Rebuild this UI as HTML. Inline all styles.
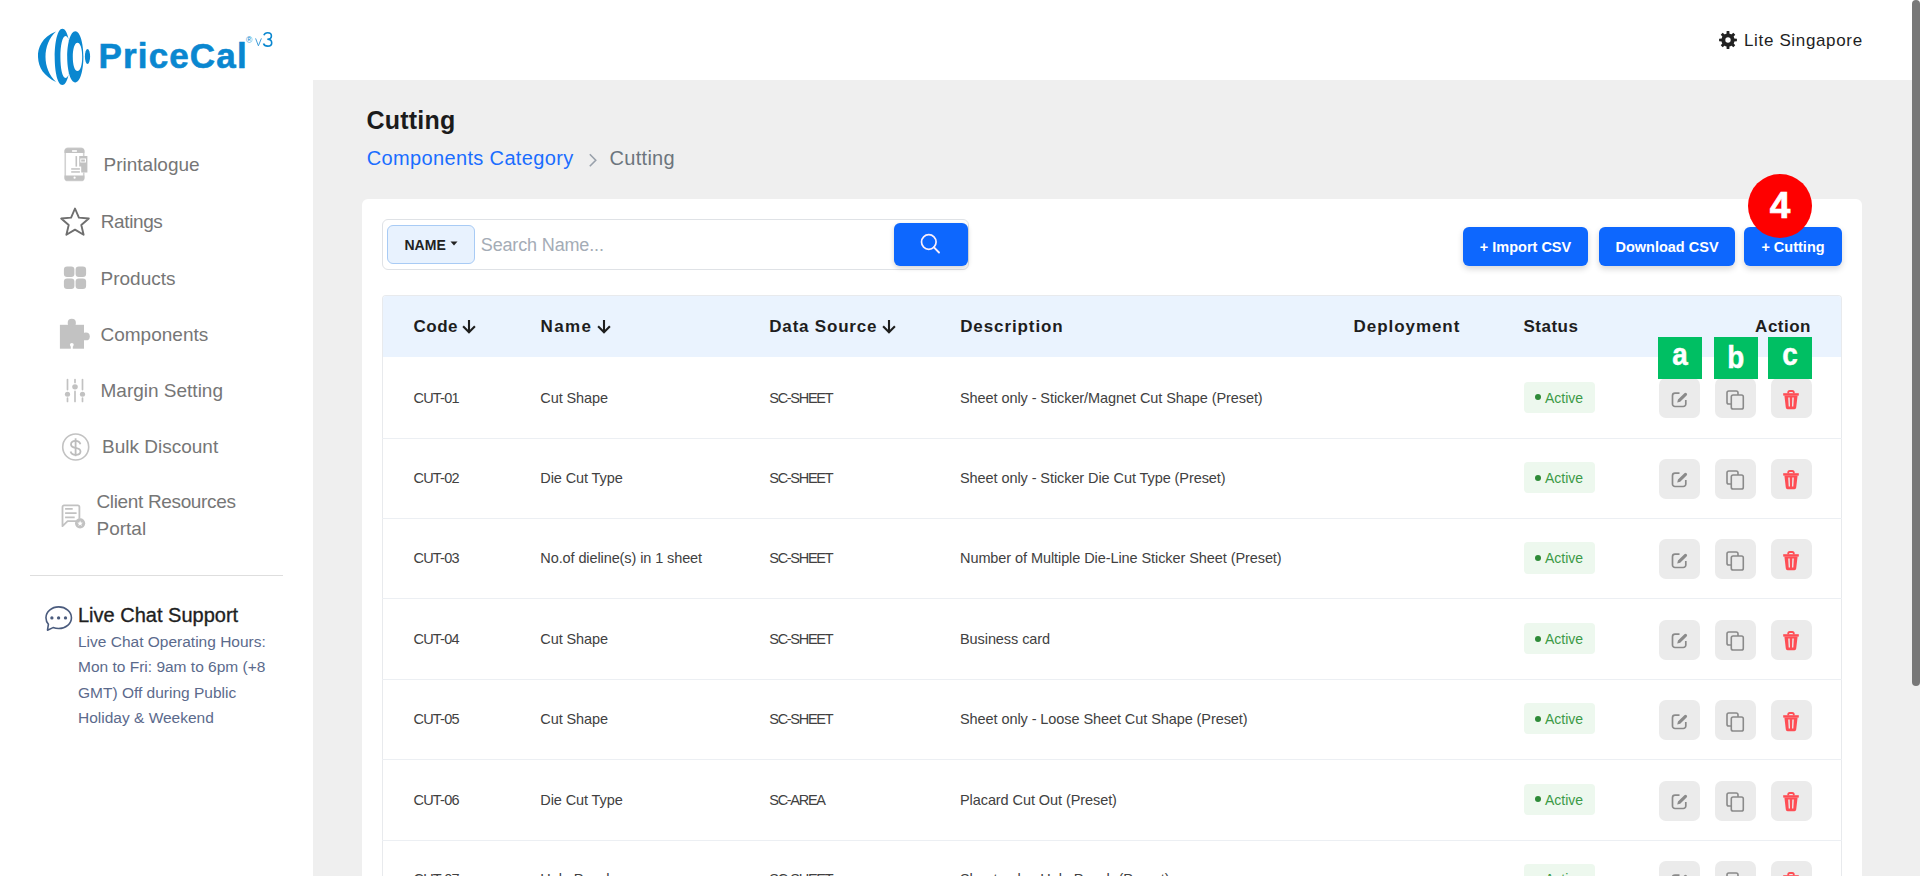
<!DOCTYPE html><html><head><meta charset="utf-8"><title>Cutting</title><style>
*{box-sizing:border-box;margin:0;padding:0}
html,body{width:1920px;height:876px;overflow:hidden;background:#fff;font-family:"Liberation Sans",sans-serif}
.t{position:absolute;white-space:nowrap}
.b{position:absolute}
svg{position:absolute;overflow:visible}
</style></head><body>
<div class="b" style="left:313px;top:80px;width:1607px;height:796px;background:#efefef"></div>
<svg style="left:0;top:0" width="320" height="100" viewBox="0 0 320 100">
<g fill="#0a87d0">
<path d="M56,31.5 C42,37 37.5,48 38,57 C38.5,68 44,76 56,82 C49,75 45.5,66 45.5,57 C45.5,47 49,38 56,31.5 Z"/>
<path fill-rule="evenodd" d="M62.4,28.7 C57.5,28.7 54.7,42 54.7,57 C54.7,72 57.5,85 62.4,85 C67.3,85 70.2,72 70.2,57 C70.2,42 67.3,28.7 62.4,28.7 Z M65.6,36 C62.2,36 60.4,46 60.4,57 C60.4,68 62.2,77.9 65.6,77.9 C69,77.9 70.8,68 70.8,57 C70.8,46 69,36 65.6,36 Z"/>
<path fill-rule="evenodd" d="M75.3,31.2 C70.5,31.2 67.2,43 67.2,56.8 C67.2,70.6 70.5,82.4 75.3,82.4 C80.1,82.4 83.4,70.6 83.4,56.8 C83.4,43 80.1,31.2 75.3,31.2 Z M77.5,42.8 C74.6,42.8 72.8,49 72.8,57 C72.8,65 74.6,71.1 77.5,71.1 C80.4,71.1 82.2,65 82.2,57 C82.2,49 80.4,42.8 77.5,42.8 Z"/>
<ellipse cx="87.5" cy="56.5" rx="2.6" ry="7.6"/>
</g>
</svg>
<div class="t" style="left:98.50px;top:38.37px;font-size:35px;line-height:35px;font-weight:700;color:#0a87d0;letter-spacing:1.15px;-webkit-text-stroke:0.6px #0a87d0;">PriceCal</div>
<div class="t" style="left:246.00px;top:36.30px;font-size:8.5px;line-height:8.5px;font-weight:400;color:#0a87d0;letter-spacing:0px;">&#174;</div>
<svg style="left:0;top:0" width="300" height="60" viewBox="0 0 300 60"><path d="M255.6,38.4 L258.4,45.8 L261.4,38.4" fill="none" stroke="#3a9ad8" stroke-width="0.95"/><path d="M263.9,35.2 C264.6,33.3 266.2,32.8 267.7,32.8 C270.1,32.8 271.4,34.3 271.4,36 C271.4,37.9 269.9,39.3 267.3,39.3 C270.3,39.3 271.7,41 271.7,42.9 C271.7,45 270,46.1 267.7,46.1 C265.6,46.1 264.1,45.2 263.5,43.4" fill="none" stroke="#0a87d0" stroke-width="1.6"/></svg>
<svg style="left:1718.8px;top:31px" width="18" height="18" viewBox="0 0 18 18"><path fill="#222" d="M7.46,3.20 L7.66,0.10 L10.34,0.10 L10.54,3.20 Z M12.01,3.81 L14.34,1.76 L16.24,3.66 L14.19,5.99 Z M14.80,7.46 L17.90,7.66 L17.90,10.34 L14.80,10.54 Z M14.19,12.01 L16.24,14.34 L14.34,16.24 L12.01,14.19 Z M10.54,14.80 L10.34,17.90 L7.66,17.90 L7.46,14.80 Z M5.99,14.19 L3.66,16.24 L1.76,14.34 L3.81,12.01 Z M3.20,10.54 L0.10,10.34 L0.10,7.66 L3.20,7.46 Z M3.81,5.99 L1.76,3.66 L3.66,1.76 L5.99,3.81 Z"/><circle cx="9" cy="9" r="6.6" fill="#222"/><circle cx="9" cy="9" r="2.7" fill="#fff"/></svg>
<div class="t" style="left:1744.00px;top:32.21px;font-size:17px;line-height:17px;font-weight:400;color:#1e1e1e;letter-spacing:0.65px;">Lite Singapore</div>
<svg style="left:60px;top:144px" width="34" height="40" viewBox="0 0 34 40">
<path d="M5.25,23 V7 A2.6,2.6 0 0 1 7.85,4.3 H21.1 A2.6,2.6 0 0 1 23.7,7 V12 M23.7,28.5 V33.9 A2.6,2.6 0 0 1 21.1,36.5 H7.85 A2.6,2.6 0 0 1 5.25,33.9 V23" fill="none" stroke="#d2d2d2" stroke-width="1.6"/>
<path d="M4.5,8.9 V7 A2.8,2.8 0 0 1 7.3,4.3 H21.6 A2.8,2.8 0 0 1 24.4,7 V8.9 Z" fill="#c2c2c2"/>
<rect x="12.1" y="6.2" width="4.8" height="1.6" fill="#fff"/>
<path d="M4.5,31.5 H24.4 V33.9 A2.8,2.8 0 0 1 21.6,36.6 H7.3 A2.8,2.8 0 0 1 4.5,33.9 Z" fill="#c2c2c2"/>
<circle cx="14.6" cy="33.7" r="1.1" fill="#fff"/>
<rect x="15.5" y="12.1" width="1.6" height="10.5" fill="#c2c2c2"/>
<path fill-rule="evenodd" d="M19.2,12.1 H27.4 V28.6 H21.2 V22.6 H19.2 Z M20.3,14.6 H26 V18.5 H20.3 Z" fill="#c2c2c2"/>
<rect x="21.2" y="15.5" width="3.7" height="2.1" fill="#c2c2c2"/>
<rect x="11.2" y="24.2" width="8.7" height="1.5" fill="#c2c2c2"/>
<rect x="11.2" y="27.2" width="8.7" height="1.5" fill="#c2c2c2"/>
</svg>
<div class="t" style="left:103.50px;top:154.82px;font-size:19px;line-height:19px;font-weight:400;color:#767676;letter-spacing:0px;">Printalogue</div>
<svg style="left:59px;top:207px" width="32" height="31" viewBox="0 0 32 31">
<path d="M16,1.5 L19.9,10.6 L29.8,11.5 L22.3,18 L24.6,27.8 L16,22.6 L7.4,27.8 L9.7,18 L2.2,11.5 L12.1,10.6 Z" fill="none" stroke="#6f6f6f" stroke-width="1.9" stroke-linejoin="round"/>
</svg>
<div class="t" style="left:100.80px;top:211.82px;font-size:19px;line-height:19px;font-weight:400;color:#767676;letter-spacing:-0.4px;">Ratings</div>
<svg style="left:63px;top:266px" width="24" height="24" viewBox="0 0 24 24">
<rect x="0.9" y="0.5" width="10.5" height="10.5" rx="3.2" fill="#c2c2c2"/><rect x="12.6" y="0.5" width="10.5" height="10.5" rx="3.2" fill="#c2c2c2"/>
<rect x="0.9" y="12.4" width="10.5" height="10.5" rx="3.2" fill="#c2c2c2"/><rect x="12.6" y="12.4" width="10.5" height="10.5" rx="3.2" fill="#c2c2c2"/>
</svg>
<div class="t" style="left:100.50px;top:268.82px;font-size:19px;line-height:19px;font-weight:400;color:#767676;letter-spacing:0px;">Products</div>
<svg style="left:59px;top:318px" width="32" height="32" viewBox="0 0 32 32">
<rect x="0.9" y="6.8" width="24.1" height="23.9" fill="#c2c2c2"/>
<circle cx="12.8" cy="4.9" r="4.1" fill="#c2c2c2"/>
<circle cx="26.9" cy="18.4" r="3.9" fill="#c2c2c2"/>
<circle cx="12.8" cy="26.8" r="1.9" fill="#fff"/>
<rect x="11.8" y="26.8" width="2" height="4.5" fill="#fff"/>
</svg>
<div class="t" style="left:100.50px;top:325.22px;font-size:19px;line-height:19px;font-weight:400;color:#767676;letter-spacing:0px;">Components</div>
<svg style="left:60px;top:374px" width="32" height="32" viewBox="0 0 32 32">
<g stroke="#c2c2c2" stroke-width="1.7" fill="none" stroke-linecap="round">
<path d="M7.5,5.6 V15.6 M7.5,24.2 V27.4"/>
<path d="M15,5.6 V8.4 M15,17.4 V27.4"/>
<path d="M22.5,5.6 V15.6 M22.5,24.2 V27.4"/>
</g>
<ellipse cx="7.5" cy="20.3" rx="2.6" ry="2.5" fill="#c2c2c2"/><ellipse cx="15" cy="12.8" rx="2.8" ry="2.6" fill="#c2c2c2"/><ellipse cx="22.5" cy="20.3" rx="2.6" ry="2.5" fill="#c2c2c2"/>
</svg>
<div class="t" style="left:100.50px;top:380.62px;font-size:19px;line-height:19px;font-weight:400;color:#767676;letter-spacing:0px;">Margin Setting</div>
<svg style="left:56px;top:428px" width="38" height="38" viewBox="0 0 38 38">
<circle cx="19.7" cy="19" r="13" fill="none" stroke="#c2c2c2" stroke-width="1.6"/>
<path d="M24.4,16.2 C23.8,14 22,12.9 19.6,12.9 C16.8,12.9 15,14.4 15,16.5 C15,18.7 16.8,19.4 19.6,19.9 C22.6,20.4 24.5,21.4 24.5,23.6 C24.5,25.6 22.5,26.9 19.6,26.9 C17,26.9 15.2,25.7 14.6,23.5" fill="none" stroke="#bdbdbd" stroke-width="1.8"/>
<path d="M19.6,10.3 V28.2" stroke="#bdbdbd" stroke-width="1.8"/>
</svg>
<div class="t" style="left:102.00px;top:437.12px;font-size:19px;line-height:19px;font-weight:400;color:#767676;letter-spacing:0px;">Bulk Discount</div>
<svg style="left:56px;top:496px" width="38" height="38" viewBox="0 0 38 38">
<path d="M23.4,22.8 V10.9 A1.5,1.5 0 0 0 21.9,9.4 H8 A1.5,1.5 0 0 0 6.5,10.9 V30.2 L11.6,25.2 H20" fill="none" stroke="#c2c2c2" stroke-width="1.8" stroke-linejoin="round"/>
<path d="M9.1,12.8 H16.7 M9.1,17.1 H20.6 M9.1,21.3 H18.7" stroke="#c2c2c2" stroke-width="1.8"/>
<circle cx="24.1" cy="27.3" r="5.1" fill="#c2c2c2"/>
<path d="M24.10,24.60 L24.83,26.59 L26.95,26.67 L25.29,27.99 L25.86,30.03 L24.10,28.85 L22.34,30.03 L22.91,27.99 L21.25,26.67 L23.37,26.59 Z" fill="#fff"/>
</svg>
<div class="t" style="left:96.50px;top:492.22px;font-size:19px;line-height:19px;font-weight:400;color:#767676;letter-spacing:-0.35px;">Client Resources</div>
<div class="t" style="left:96.50px;top:519.22px;font-size:19px;line-height:19px;font-weight:400;color:#767676;letter-spacing:0px;">Portal</div>
<div class="b" style="left:30px;top:575px;width:253px;height:1px;background:#dedede"></div>
<svg style="left:44px;top:605px" width="30" height="28" viewBox="0 0 30 28">
<path d="M9,22.6 C10.8,23.2 12.7,23.55 14.7,23.55 C21.8,23.55 27.45,18.7 27.45,12.7 C27.45,6.7 21.8,1.85 14.7,1.85 C7.6,1.85 1.95,6.7 1.95,12.7 C1.95,15.2 2.8,17.4 4.4,19.3 L3.5,25.2 Z" fill="none" stroke="#4a5b7d" stroke-width="1.6" stroke-linejoin="round"/>
<circle cx="7.9" cy="12.9" r="1.65" fill="#4a5b7d"/><circle cx="14.6" cy="12.9" r="1.65" fill="#4a5b7d"/><circle cx="21.5" cy="12.9" r="1.65" fill="#4a5b7d"/>
</svg>
<div class="t" style="left:78.00px;top:605.07px;font-size:20px;line-height:20px;font-weight:400;color:#1f1f1f;letter-spacing:0px;-webkit-text-stroke:0.35px #1f1f1f;">Live Chat Support</div>
<div class="t" style="left:78.00px;top:634.18px;font-size:15.5px;line-height:15.5px;font-weight:400;color:#5b6a8c;letter-spacing:0px;">Live Chat Operating Hours:</div>
<div class="t" style="left:78.00px;top:658.78px;font-size:15.5px;line-height:15.5px;font-weight:400;color:#5b6a8c;letter-spacing:0px;">Mon to Fri: 9am to 6pm (+8</div>
<div class="t" style="left:78.00px;top:684.58px;font-size:15.5px;line-height:15.5px;font-weight:400;color:#5b6a8c;letter-spacing:0px;">GMT) Off during Public</div>
<div class="t" style="left:78.00px;top:709.88px;font-size:15.5px;line-height:15.5px;font-weight:400;color:#5b6a8c;letter-spacing:0px;">Holiday &amp; Weekend</div>
<div class="t" style="left:366.50px;top:107.84px;font-size:25px;line-height:25px;font-weight:700;color:#1b1b1b;letter-spacing:0.2px;">Cutting</div>
<div class="t" style="left:366.80px;top:147.87px;font-size:20px;line-height:20px;font-weight:400;color:#1a6dff;letter-spacing:0.35px;">Components Category</div>
<svg style="left:586px;top:150px" width="14" height="20" viewBox="0 0 14 20"><path d="M3.8,4.2 L9.75,10.2 L3.8,16.2" fill="none" stroke="#99a1ab" stroke-width="1.6"/></svg>
<div class="t" style="left:609.50px;top:147.87px;font-size:20px;line-height:20px;font-weight:400;color:#6c757d;letter-spacing:0.3px;">Cutting</div>
<div class="b" style="left:362px;top:199px;width:1500px;height:701px;background:#fff;border-radius:6px"></div>
<div class="b" style="left:382px;top:219px;width:587px;height:51px;border:1px solid #dfe2e6;border-radius:6px;background:#fff"></div>
<div class="b" style="left:387px;top:225px;width:88px;height:39px;border:1px solid #a8cbf5;border-radius:6px;background:#e8f2fe"></div>
<div class="t" style="left:404.50px;top:237.95px;font-size:14px;line-height:14px;font-weight:700;color:#222;letter-spacing:0px;">NAME</div>
<svg style="left:450px;top:241px" width="8" height="5" viewBox="0 0 8 5"><path d="M0.5,0.5 H7.5 L4,4.6 Z" fill="#222"/></svg>
<div class="t" style="left:480.80px;top:235.76px;font-size:18px;line-height:18px;font-weight:400;color:#a4acb6;letter-spacing:-0.15px;">Search Name...</div>
<div class="b" style="left:894px;top:223px;width:74px;height:43px;background:#0d67fe;border-radius:6px;box-shadow:0 2px 5px rgba(0,0,0,.18)"></div>
<svg style="left:918px;top:232px" width="24" height="24" viewBox="0 0 24 24"><circle cx="10.8" cy="10" r="7.3" fill="none" stroke="#fbeefa" stroke-width="1.7"/><path d="M16,15.3 L21,20.5" stroke="#fbeefa" stroke-width="1.9" stroke-linecap="round"/></svg>
<div class="b" style="left:1463px;top:227px;width:125px;height:39px;background:#0d67fe;border-radius:6px;box-shadow:0 3px 6px rgba(0,0,0,.16);color:#fff;font-weight:700;font-size:14.5px;line-height:41px;text-align:center;white-space:nowrap">+ Import CSV</div>
<div class="b" style="left:1599px;top:227px;width:136px;height:39px;background:#0d67fe;border-radius:6px;box-shadow:0 3px 6px rgba(0,0,0,.16);color:#fff;font-weight:700;font-size:14.5px;line-height:41px;text-align:center;white-space:nowrap">Download CSV</div>
<div class="b" style="left:1744px;top:227px;width:98px;height:39px;background:#0d67fe;border-radius:6px;box-shadow:0 3px 6px rgba(0,0,0,.16);color:#fff;font-weight:700;font-size:14.5px;line-height:41px;text-align:center;white-space:nowrap">+ Cutting</div>
<div class="b" style="left:1748px;top:173.6px;width:64px;height:64px;border-radius:50%;background:#fe0000;color:#fff;font-weight:700;font-size:37px;line-height:64px;text-align:center;-webkit-text-stroke:0.7px #fff">4</div>
<div class="b" style="left:382px;top:294.6px;width:1460px;height:605.4px;border:1px solid #e8eaed;border-bottom:0;border-top-left-radius:4px;border-top-right-radius:4px"></div>
<div class="b" style="left:383px;top:295.6px;width:1458px;height:61.89999999999998px;background:#eaf3fe;border-top-left-radius:3px;border-top-right-radius:3px"></div>
<div class="t" style="left:413.50px;top:318.31px;font-size:17px;line-height:17px;font-weight:700;color:#1e1e1e;letter-spacing:0.5px;">Code</div>
<div class="t" style="left:540.50px;top:318.31px;font-size:17px;line-height:17px;font-weight:700;color:#1e1e1e;letter-spacing:1.4px;">Name</div>
<div class="t" style="left:769.30px;top:318.31px;font-size:17px;line-height:17px;font-weight:700;color:#1e1e1e;letter-spacing:0.8px;">Data Source</div>
<div class="t" style="left:960.20px;top:318.31px;font-size:17px;line-height:17px;font-weight:700;color:#1e1e1e;letter-spacing:0.9px;">Description</div>
<div class="t" style="left:1353.50px;top:318.31px;font-size:17px;line-height:17px;font-weight:700;color:#1e1e1e;letter-spacing:0.95px;">Deployment</div>
<div class="t" style="left:1523.50px;top:318.31px;font-size:17px;line-height:17px;font-weight:700;color:#1e1e1e;letter-spacing:0.5px;">Status</div>
<div class="t" style="right:109px;top:318.31px;font-size:17px;line-height:17px;font-weight:700;color:#1e1e1e;letter-spacing:0.5px">Action</div>
<svg style="left:462.3px;top:318px" width="14" height="16" viewBox="0 0 14 16"><path d="M7,1.9 V14 M1.1,8.3 L7,14.2 L12.9,8.3" fill="none" stroke="#1e1e1e" stroke-width="2.1"/></svg>
<svg style="left:596.7px;top:318px" width="14" height="16" viewBox="0 0 14 16"><path d="M7,1.9 V14 M1.1,8.3 L7,14.2 L12.9,8.3" fill="none" stroke="#1e1e1e" stroke-width="2.1"/></svg>
<svg style="left:881.6px;top:318px" width="14" height="16" viewBox="0 0 14 16"><path d="M7,1.9 V14 M1.1,8.3 L7,14.2 L12.9,8.3" fill="none" stroke="#1e1e1e" stroke-width="2.1"/></svg>
<div class="t" style="left:413.50px;top:390.53px;font-size:14.5px;line-height:14.5px;font-weight:400;color:#414141;letter-spacing:-0.8px;">CUT-01</div>
<div class="t" style="left:540.30px;top:390.53px;font-size:14.5px;line-height:14.5px;font-weight:400;color:#414141;letter-spacing:-0.1px;">Cut Shape</div>
<div class="t" style="left:769.30px;top:390.53px;font-size:14.5px;line-height:14.5px;font-weight:400;color:#414141;letter-spacing:-1.3px;">SC-SHEET</div>
<div class="t" style="left:960.00px;top:390.53px;font-size:14.5px;line-height:14.5px;font-weight:400;color:#414141;letter-spacing:-0.08px;">Sheet only - Sticker/Magnet Cut Shape (Preset)</div>
<div class="b" style="left:1524px;top:381.6px;width:71px;height:31.099999999999966px;background:#edf8ee;border-radius:4px"></div>
<div class="b" style="left:1535px;top:394.3px;width:6px;height:6.0px;background:#2e8b38;border-radius:50%"></div>
<div class="t" style="left:1545.00px;top:390.65px;font-size:14px;line-height:14px;font-weight:400;color:#3b9a46;letter-spacing:0px;">Active</div>
<div class="b" style="left:1659px;top:378.4px;width:41px;height:40.0px;background:#ebebeb;border-radius:7px"></div>
<div class="b" style="left:1715px;top:378.4px;width:41px;height:40.0px;background:#ebebeb;border-radius:7px"></div>
<div class="b" style="left:1771px;top:378.4px;width:41px;height:40.0px;background:#ebebeb;border-radius:7px"></div>
<svg style="left:1671px;top:390.90px" width="18" height="18" viewBox="0 0 18 18"><path d="M8.5,2.2 H4 A2.5,2.5 0 0 0 1.5,4.7 V13 A2.5,2.5 0 0 0 4,15.5 H12.3 A2.5,2.5 0 0 0 14.8,13 V9" fill="none" stroke="#8a8a8a" stroke-width="1.7"/><path d="M6.2,11.6 L7,8.6 L13.4,2.2 A1.4,1.4 0 0 1 15.6,4.4 L9.2,10.8 Z" fill="#8a8a8a"/></svg>
<svg style="left:1726px;top:389.90px" width="19" height="20" viewBox="0 0 19 20"><rect x="1" y="1" width="11" height="13" rx="1.8" fill="none" stroke="#8a8a8a" stroke-width="1.6"/><rect x="5.3" y="5" width="12" height="14" rx="1.8" fill="#ebebeb" stroke="#8a8a8a" stroke-width="1.6"/></svg>
<svg style="left:1782px;top:389.90px" width="18" height="20" viewBox="0 0 18 20"><path d="M6.2,3.5 V2.6 A1.6,1.6 0 0 1 7.8,1 H10.2 A1.6,1.6 0 0 1 11.8,2.6 V3.5" fill="none" stroke="#fe4e55" stroke-width="1.8"/><path d="M1.2,3.2 H16.8 V5.6 H1.2 Z" fill="#fe4e55"/><path d="M2.4,5.6 H15.6 L14.2,17.6 A1.8,1.8 0 0 1 12.4,19.2 H5.6 A1.8,1.8 0 0 1 3.8,17.6 Z M6.2,7.6 L6.7,16.6 H8 L7.7,7.6 Z M10.3,7.6 L10,16.6 H11.3 L11.8,7.6 Z" fill="#fe4e55" fill-rule="evenodd"/></svg>
<div class="b" style="left:382px;top:437.62px;width:1460px;height:1.0px;background:#eceff3"></div>
<div class="t" style="left:413.50px;top:470.95px;font-size:14.5px;line-height:14.5px;font-weight:400;color:#414141;letter-spacing:-0.8px;">CUT-02</div>
<div class="t" style="left:540.30px;top:470.95px;font-size:14.5px;line-height:14.5px;font-weight:400;color:#414141;letter-spacing:-0.1px;">Die Cut Type</div>
<div class="t" style="left:769.30px;top:470.95px;font-size:14.5px;line-height:14.5px;font-weight:400;color:#414141;letter-spacing:-1.3px;">SC-SHEET</div>
<div class="t" style="left:960.00px;top:470.95px;font-size:14.5px;line-height:14.5px;font-weight:400;color:#414141;letter-spacing:-0.08px;">Sheet only - Sticker Die Cut Type (Preset)</div>
<div class="b" style="left:1524px;top:462.02px;width:71px;height:31.100000000000023px;background:#edf8ee;border-radius:4px"></div>
<div class="b" style="left:1535px;top:474.72px;width:6px;height:6.0px;background:#2e8b38;border-radius:50%"></div>
<div class="t" style="left:1545.00px;top:471.07px;font-size:14px;line-height:14px;font-weight:400;color:#3b9a46;letter-spacing:0px;">Active</div>
<div class="b" style="left:1659px;top:458.82px;width:41px;height:40.0px;background:#ebebeb;border-radius:7px"></div>
<div class="b" style="left:1715px;top:458.82px;width:41px;height:40.0px;background:#ebebeb;border-radius:7px"></div>
<div class="b" style="left:1771px;top:458.82px;width:41px;height:40.0px;background:#ebebeb;border-radius:7px"></div>
<svg style="left:1671px;top:471.32px" width="18" height="18" viewBox="0 0 18 18"><path d="M8.5,2.2 H4 A2.5,2.5 0 0 0 1.5,4.7 V13 A2.5,2.5 0 0 0 4,15.5 H12.3 A2.5,2.5 0 0 0 14.8,13 V9" fill="none" stroke="#8a8a8a" stroke-width="1.7"/><path d="M6.2,11.6 L7,8.6 L13.4,2.2 A1.4,1.4 0 0 1 15.6,4.4 L9.2,10.8 Z" fill="#8a8a8a"/></svg>
<svg style="left:1726px;top:470.32px" width="19" height="20" viewBox="0 0 19 20"><rect x="1" y="1" width="11" height="13" rx="1.8" fill="none" stroke="#8a8a8a" stroke-width="1.6"/><rect x="5.3" y="5" width="12" height="14" rx="1.8" fill="#ebebeb" stroke="#8a8a8a" stroke-width="1.6"/></svg>
<svg style="left:1782px;top:470.32px" width="18" height="20" viewBox="0 0 18 20"><path d="M6.2,3.5 V2.6 A1.6,1.6 0 0 1 7.8,1 H10.2 A1.6,1.6 0 0 1 11.8,2.6 V3.5" fill="none" stroke="#fe4e55" stroke-width="1.8"/><path d="M1.2,3.2 H16.8 V5.6 H1.2 Z" fill="#fe4e55"/><path d="M2.4,5.6 H15.6 L14.2,17.6 A1.8,1.8 0 0 1 12.4,19.2 H5.6 A1.8,1.8 0 0 1 3.8,17.6 Z M6.2,7.6 L6.7,16.6 H8 L7.7,7.6 Z M10.3,7.6 L10,16.6 H11.3 L11.8,7.6 Z" fill="#fe4e55" fill-rule="evenodd"/></svg>
<div class="b" style="left:382px;top:518.04px;width:1460px;height:1.0px;background:#eceff3"></div>
<div class="t" style="left:413.50px;top:551.37px;font-size:14.5px;line-height:14.5px;font-weight:400;color:#414141;letter-spacing:-0.8px;">CUT-03</div>
<div class="t" style="left:540.30px;top:551.37px;font-size:14.5px;line-height:14.5px;font-weight:400;color:#414141;letter-spacing:-0.1px;">No.of dieline(s) in 1 sheet</div>
<div class="t" style="left:769.30px;top:551.37px;font-size:14.5px;line-height:14.5px;font-weight:400;color:#414141;letter-spacing:-1.3px;">SC-SHEET</div>
<div class="t" style="left:960.00px;top:551.37px;font-size:14.5px;line-height:14.5px;font-weight:400;color:#414141;letter-spacing:-0.08px;">Number of Multiple Die-Line Sticker Sheet (Preset)</div>
<div class="b" style="left:1524px;top:542.44px;width:71px;height:31.09999999999991px;background:#edf8ee;border-radius:4px"></div>
<div class="b" style="left:1535px;top:555.14px;width:6px;height:6.0px;background:#2e8b38;border-radius:50%"></div>
<div class="t" style="left:1545.00px;top:551.49px;font-size:14px;line-height:14px;font-weight:400;color:#3b9a46;letter-spacing:0px;">Active</div>
<div class="b" style="left:1659px;top:539.24px;width:41px;height:40.0px;background:#ebebeb;border-radius:7px"></div>
<div class="b" style="left:1715px;top:539.24px;width:41px;height:40.0px;background:#ebebeb;border-radius:7px"></div>
<div class="b" style="left:1771px;top:539.24px;width:41px;height:40.0px;background:#ebebeb;border-radius:7px"></div>
<svg style="left:1671px;top:551.74px" width="18" height="18" viewBox="0 0 18 18"><path d="M8.5,2.2 H4 A2.5,2.5 0 0 0 1.5,4.7 V13 A2.5,2.5 0 0 0 4,15.5 H12.3 A2.5,2.5 0 0 0 14.8,13 V9" fill="none" stroke="#8a8a8a" stroke-width="1.7"/><path d="M6.2,11.6 L7,8.6 L13.4,2.2 A1.4,1.4 0 0 1 15.6,4.4 L9.2,10.8 Z" fill="#8a8a8a"/></svg>
<svg style="left:1726px;top:550.74px" width="19" height="20" viewBox="0 0 19 20"><rect x="1" y="1" width="11" height="13" rx="1.8" fill="none" stroke="#8a8a8a" stroke-width="1.6"/><rect x="5.3" y="5" width="12" height="14" rx="1.8" fill="#ebebeb" stroke="#8a8a8a" stroke-width="1.6"/></svg>
<svg style="left:1782px;top:550.74px" width="18" height="20" viewBox="0 0 18 20"><path d="M6.2,3.5 V2.6 A1.6,1.6 0 0 1 7.8,1 H10.2 A1.6,1.6 0 0 1 11.8,2.6 V3.5" fill="none" stroke="#fe4e55" stroke-width="1.8"/><path d="M1.2,3.2 H16.8 V5.6 H1.2 Z" fill="#fe4e55"/><path d="M2.4,5.6 H15.6 L14.2,17.6 A1.8,1.8 0 0 1 12.4,19.2 H5.6 A1.8,1.8 0 0 1 3.8,17.6 Z M6.2,7.6 L6.7,16.6 H8 L7.7,7.6 Z M10.3,7.6 L10,16.6 H11.3 L11.8,7.6 Z" fill="#fe4e55" fill-rule="evenodd"/></svg>
<div class="b" style="left:382px;top:598.46px;width:1460px;height:1.0px;background:#eceff3"></div>
<div class="t" style="left:413.50px;top:631.79px;font-size:14.5px;line-height:14.5px;font-weight:400;color:#414141;letter-spacing:-0.8px;">CUT-04</div>
<div class="t" style="left:540.30px;top:631.79px;font-size:14.5px;line-height:14.5px;font-weight:400;color:#414141;letter-spacing:-0.1px;">Cut Shape</div>
<div class="t" style="left:769.30px;top:631.79px;font-size:14.5px;line-height:14.5px;font-weight:400;color:#414141;letter-spacing:-1.3px;">SC-SHEET</div>
<div class="t" style="left:960.00px;top:631.79px;font-size:14.5px;line-height:14.5px;font-weight:400;color:#414141;letter-spacing:-0.08px;">Business card</div>
<div class="b" style="left:1524px;top:622.86px;width:71px;height:31.100000000000023px;background:#edf8ee;border-radius:4px"></div>
<div class="b" style="left:1535px;top:635.56px;width:6px;height:6.0px;background:#2e8b38;border-radius:50%"></div>
<div class="t" style="left:1545.00px;top:631.91px;font-size:14px;line-height:14px;font-weight:400;color:#3b9a46;letter-spacing:0px;">Active</div>
<div class="b" style="left:1659px;top:619.66px;width:41px;height:40.0px;background:#ebebeb;border-radius:7px"></div>
<div class="b" style="left:1715px;top:619.66px;width:41px;height:40.0px;background:#ebebeb;border-radius:7px"></div>
<div class="b" style="left:1771px;top:619.66px;width:41px;height:40.0px;background:#ebebeb;border-radius:7px"></div>
<svg style="left:1671px;top:632.16px" width="18" height="18" viewBox="0 0 18 18"><path d="M8.5,2.2 H4 A2.5,2.5 0 0 0 1.5,4.7 V13 A2.5,2.5 0 0 0 4,15.5 H12.3 A2.5,2.5 0 0 0 14.8,13 V9" fill="none" stroke="#8a8a8a" stroke-width="1.7"/><path d="M6.2,11.6 L7,8.6 L13.4,2.2 A1.4,1.4 0 0 1 15.6,4.4 L9.2,10.8 Z" fill="#8a8a8a"/></svg>
<svg style="left:1726px;top:631.16px" width="19" height="20" viewBox="0 0 19 20"><rect x="1" y="1" width="11" height="13" rx="1.8" fill="none" stroke="#8a8a8a" stroke-width="1.6"/><rect x="5.3" y="5" width="12" height="14" rx="1.8" fill="#ebebeb" stroke="#8a8a8a" stroke-width="1.6"/></svg>
<svg style="left:1782px;top:631.16px" width="18" height="20" viewBox="0 0 18 20"><path d="M6.2,3.5 V2.6 A1.6,1.6 0 0 1 7.8,1 H10.2 A1.6,1.6 0 0 1 11.8,2.6 V3.5" fill="none" stroke="#fe4e55" stroke-width="1.8"/><path d="M1.2,3.2 H16.8 V5.6 H1.2 Z" fill="#fe4e55"/><path d="M2.4,5.6 H15.6 L14.2,17.6 A1.8,1.8 0 0 1 12.4,19.2 H5.6 A1.8,1.8 0 0 1 3.8,17.6 Z M6.2,7.6 L6.7,16.6 H8 L7.7,7.6 Z M10.3,7.6 L10,16.6 H11.3 L11.8,7.6 Z" fill="#fe4e55" fill-rule="evenodd"/></svg>
<div class="b" style="left:382px;top:678.88px;width:1460px;height:1.0px;background:#eceff3"></div>
<div class="t" style="left:413.50px;top:712.21px;font-size:14.5px;line-height:14.5px;font-weight:400;color:#414141;letter-spacing:-0.8px;">CUT-05</div>
<div class="t" style="left:540.30px;top:712.21px;font-size:14.5px;line-height:14.5px;font-weight:400;color:#414141;letter-spacing:-0.1px;">Cut Shape</div>
<div class="t" style="left:769.30px;top:712.21px;font-size:14.5px;line-height:14.5px;font-weight:400;color:#414141;letter-spacing:-1.3px;">SC-SHEET</div>
<div class="t" style="left:960.00px;top:712.21px;font-size:14.5px;line-height:14.5px;font-weight:400;color:#414141;letter-spacing:-0.08px;">Sheet only - Loose Sheet Cut Shape (Preset)</div>
<div class="b" style="left:1524px;top:703.28px;width:71px;height:31.100000000000023px;background:#edf8ee;border-radius:4px"></div>
<div class="b" style="left:1535px;top:715.98px;width:6px;height:6.0px;background:#2e8b38;border-radius:50%"></div>
<div class="t" style="left:1545.00px;top:712.33px;font-size:14px;line-height:14px;font-weight:400;color:#3b9a46;letter-spacing:0px;">Active</div>
<div class="b" style="left:1659px;top:700.08px;width:41px;height:40.0px;background:#ebebeb;border-radius:7px"></div>
<div class="b" style="left:1715px;top:700.08px;width:41px;height:40.0px;background:#ebebeb;border-radius:7px"></div>
<div class="b" style="left:1771px;top:700.08px;width:41px;height:40.0px;background:#ebebeb;border-radius:7px"></div>
<svg style="left:1671px;top:712.58px" width="18" height="18" viewBox="0 0 18 18"><path d="M8.5,2.2 H4 A2.5,2.5 0 0 0 1.5,4.7 V13 A2.5,2.5 0 0 0 4,15.5 H12.3 A2.5,2.5 0 0 0 14.8,13 V9" fill="none" stroke="#8a8a8a" stroke-width="1.7"/><path d="M6.2,11.6 L7,8.6 L13.4,2.2 A1.4,1.4 0 0 1 15.6,4.4 L9.2,10.8 Z" fill="#8a8a8a"/></svg>
<svg style="left:1726px;top:711.58px" width="19" height="20" viewBox="0 0 19 20"><rect x="1" y="1" width="11" height="13" rx="1.8" fill="none" stroke="#8a8a8a" stroke-width="1.6"/><rect x="5.3" y="5" width="12" height="14" rx="1.8" fill="#ebebeb" stroke="#8a8a8a" stroke-width="1.6"/></svg>
<svg style="left:1782px;top:711.58px" width="18" height="20" viewBox="0 0 18 20"><path d="M6.2,3.5 V2.6 A1.6,1.6 0 0 1 7.8,1 H10.2 A1.6,1.6 0 0 1 11.8,2.6 V3.5" fill="none" stroke="#fe4e55" stroke-width="1.8"/><path d="M1.2,3.2 H16.8 V5.6 H1.2 Z" fill="#fe4e55"/><path d="M2.4,5.6 H15.6 L14.2,17.6 A1.8,1.8 0 0 1 12.4,19.2 H5.6 A1.8,1.8 0 0 1 3.8,17.6 Z M6.2,7.6 L6.7,16.6 H8 L7.7,7.6 Z M10.3,7.6 L10,16.6 H11.3 L11.8,7.6 Z" fill="#fe4e55" fill-rule="evenodd"/></svg>
<div class="b" style="left:382px;top:759.3px;width:1460px;height:1.0px;background:#eceff3"></div>
<div class="t" style="left:413.50px;top:792.63px;font-size:14.5px;line-height:14.5px;font-weight:400;color:#414141;letter-spacing:-0.8px;">CUT-06</div>
<div class="t" style="left:540.30px;top:792.63px;font-size:14.5px;line-height:14.5px;font-weight:400;color:#414141;letter-spacing:-0.1px;">Die Cut Type</div>
<div class="t" style="left:769.30px;top:792.63px;font-size:14.5px;line-height:14.5px;font-weight:400;color:#414141;letter-spacing:-1.3px;">SC-AREA</div>
<div class="t" style="left:960.00px;top:792.63px;font-size:14.5px;line-height:14.5px;font-weight:400;color:#414141;letter-spacing:-0.08px;">Placard Cut Out (Preset)</div>
<div class="b" style="left:1524px;top:783.7px;width:71px;height:31.09999999999991px;background:#edf8ee;border-radius:4px"></div>
<div class="b" style="left:1535px;top:796.4px;width:6px;height:6.0px;background:#2e8b38;border-radius:50%"></div>
<div class="t" style="left:1545.00px;top:792.75px;font-size:14px;line-height:14px;font-weight:400;color:#3b9a46;letter-spacing:0px;">Active</div>
<div class="b" style="left:1659px;top:780.5px;width:41px;height:40.0px;background:#ebebeb;border-radius:7px"></div>
<div class="b" style="left:1715px;top:780.5px;width:41px;height:40.0px;background:#ebebeb;border-radius:7px"></div>
<div class="b" style="left:1771px;top:780.5px;width:41px;height:40.0px;background:#ebebeb;border-radius:7px"></div>
<svg style="left:1671px;top:793.00px" width="18" height="18" viewBox="0 0 18 18"><path d="M8.5,2.2 H4 A2.5,2.5 0 0 0 1.5,4.7 V13 A2.5,2.5 0 0 0 4,15.5 H12.3 A2.5,2.5 0 0 0 14.8,13 V9" fill="none" stroke="#8a8a8a" stroke-width="1.7"/><path d="M6.2,11.6 L7,8.6 L13.4,2.2 A1.4,1.4 0 0 1 15.6,4.4 L9.2,10.8 Z" fill="#8a8a8a"/></svg>
<svg style="left:1726px;top:792.00px" width="19" height="20" viewBox="0 0 19 20"><rect x="1" y="1" width="11" height="13" rx="1.8" fill="none" stroke="#8a8a8a" stroke-width="1.6"/><rect x="5.3" y="5" width="12" height="14" rx="1.8" fill="#ebebeb" stroke="#8a8a8a" stroke-width="1.6"/></svg>
<svg style="left:1782px;top:792.00px" width="18" height="20" viewBox="0 0 18 20"><path d="M6.2,3.5 V2.6 A1.6,1.6 0 0 1 7.8,1 H10.2 A1.6,1.6 0 0 1 11.8,2.6 V3.5" fill="none" stroke="#fe4e55" stroke-width="1.8"/><path d="M1.2,3.2 H16.8 V5.6 H1.2 Z" fill="#fe4e55"/><path d="M2.4,5.6 H15.6 L14.2,17.6 A1.8,1.8 0 0 1 12.4,19.2 H5.6 A1.8,1.8 0 0 1 3.8,17.6 Z M6.2,7.6 L6.7,16.6 H8 L7.7,7.6 Z M10.3,7.6 L10,16.6 H11.3 L11.8,7.6 Z" fill="#fe4e55" fill-rule="evenodd"/></svg>
<div class="b" style="left:382px;top:839.72px;width:1460px;height:1.0px;background:#eceff3"></div>
<div class="t" style="left:413.50px;top:872.25px;font-size:14.5px;line-height:14.5px;font-weight:400;color:#414141;letter-spacing:-0.8px;">CUT-07</div>
<div class="t" style="left:540.30px;top:872.25px;font-size:14.5px;line-height:14.5px;font-weight:400;color:#414141;letter-spacing:-0.1px;">Hole Punch</div>
<div class="t" style="left:769.30px;top:872.25px;font-size:14.5px;line-height:14.5px;font-weight:400;color:#414141;letter-spacing:-1.3px;">SC-SHEET</div>
<div class="t" style="left:960.00px;top:872.25px;font-size:14.5px;line-height:14.5px;font-weight:400;color:#414141;letter-spacing:-0.08px;">Sheet only - Hole Punch (Preset)</div>
<div class="b" style="left:1524px;top:864.12px;width:71px;height:31.100000000000023px;background:#edf8ee;border-radius:4px"></div>
<div class="b" style="left:1535px;top:876.82px;width:6px;height:6.0px;background:#2e8b38;border-radius:50%"></div>
<div class="t" style="left:1545.00px;top:872.37px;font-size:14px;line-height:14px;font-weight:400;color:#3b9a46;letter-spacing:0px;">Active</div>
<div class="b" style="left:1659px;top:860.92px;width:41px;height:40.0px;background:#ebebeb;border-radius:7px"></div>
<div class="b" style="left:1715px;top:860.92px;width:41px;height:40.0px;background:#ebebeb;border-radius:7px"></div>
<div class="b" style="left:1771px;top:860.92px;width:41px;height:40.0px;background:#ebebeb;border-radius:7px"></div>
<svg style="left:1671px;top:873.42px" width="18" height="18" viewBox="0 0 18 18"><path d="M8.5,2.2 H4 A2.5,2.5 0 0 0 1.5,4.7 V13 A2.5,2.5 0 0 0 4,15.5 H12.3 A2.5,2.5 0 0 0 14.8,13 V9" fill="none" stroke="#8a8a8a" stroke-width="1.7"/><path d="M6.2,11.6 L7,8.6 L13.4,2.2 A1.4,1.4 0 0 1 15.6,4.4 L9.2,10.8 Z" fill="#8a8a8a"/></svg>
<svg style="left:1726px;top:872.42px" width="19" height="20" viewBox="0 0 19 20"><rect x="1" y="1" width="11" height="13" rx="1.8" fill="none" stroke="#8a8a8a" stroke-width="1.6"/><rect x="5.3" y="5" width="12" height="14" rx="1.8" fill="#ebebeb" stroke="#8a8a8a" stroke-width="1.6"/></svg>
<svg style="left:1782px;top:872.42px" width="18" height="20" viewBox="0 0 18 20"><path d="M6.2,3.5 V2.6 A1.6,1.6 0 0 1 7.8,1 H10.2 A1.6,1.6 0 0 1 11.8,2.6 V3.5" fill="none" stroke="#fe4e55" stroke-width="1.8"/><path d="M1.2,3.2 H16.8 V5.6 H1.2 Z" fill="#fe4e55"/><path d="M2.4,5.6 H15.6 L14.2,17.6 A1.8,1.8 0 0 1 12.4,19.2 H5.6 A1.8,1.8 0 0 1 3.8,17.6 Z M6.2,7.6 L6.7,16.6 H8 L7.7,7.6 Z M10.3,7.6 L10,16.6 H11.3 L11.8,7.6 Z" fill="#fe4e55" fill-rule="evenodd"/></svg>
<div class="b" style="left:1658px;top:337px;width:44px;height:42px;background:#00bf63;color:#fff;font-weight:700;font-size:32px;line-height:35px;text-align:center;-webkit-text-stroke:0.5px #fff"><span style="display:inline-block;transform:scaleX(0.87)">a</span></div>
<div class="b" style="left:1714px;top:337px;width:44px;height:42px;background:#00bf63;color:#fff;font-weight:700;font-size:32px;line-height:41px;text-align:center;-webkit-text-stroke:0.5px #fff"><span style="display:inline-block;transform:scaleX(0.87)">b</span></div>
<div class="b" style="left:1768px;top:337px;width:44px;height:42px;background:#00bf63;color:#fff;font-weight:700;font-size:32px;line-height:35.5px;text-align:center;-webkit-text-stroke:0.5px #fff"><span style="display:inline-block;transform:scaleX(0.87)">c</span></div>
<div class="b" style="left:1912px;top:0px;width:8px;height:686px;background:#787878;border-radius:4px"></div>
</body></html>
